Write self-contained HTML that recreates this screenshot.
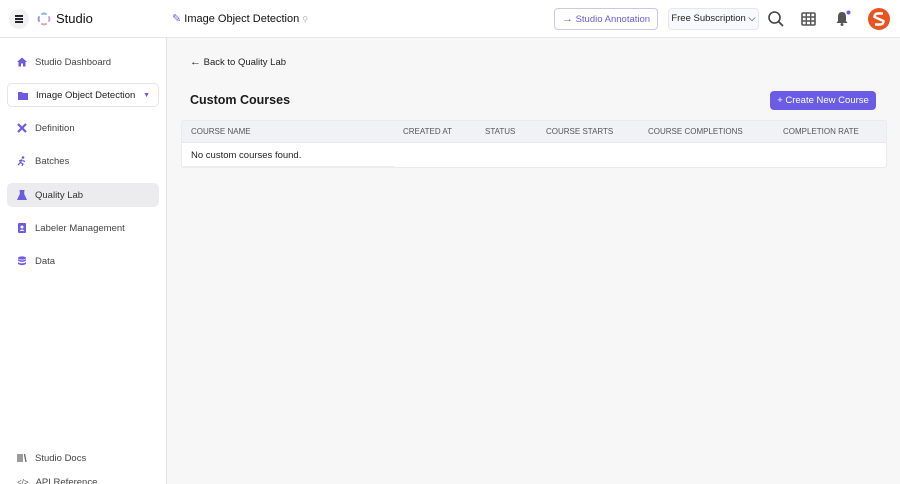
<!DOCTYPE html><html><head><style>
*{box-sizing:border-box;margin:0;padding:0}
html,body{width:900px;height:484px;overflow:hidden}
body{font-family:"Liberation Sans",sans-serif;background:#f7f7f8;color:#222;position:relative}
.hdr{position:absolute;left:0;top:0;width:900px;height:38px;background:#fff;border-bottom:1px solid #e6e6e8}
.sb{position:absolute;left:0;top:38px;width:167px;height:446px;background:#fff;border-right:1px solid #e4e4e6;overflow:hidden}
.it{position:absolute;left:7px;width:152px;height:24px;font-size:9.5px;color:#444;display:flex;align-items:center;padding-left:10px;border-radius:5px}
.it svg{margin-right:8px}
.ab{position:absolute;font-size:9.5px}
</style></head><body>
<div class="hdr">
 <div style="position:absolute;left:9px;top:9px;width:20px;height:20px;border-radius:50%;background:#f1f1f3"></div>
 <div style="position:absolute;left:15px;top:15px;width:8px;height:1.5px;background:#222;box-shadow:0 3px 0 #222,0 6px 0 #222"></div>
 <svg style="position:absolute;left:37px;top:12px" width="14" height="14" viewBox="0 0 14 14"><g fill="none" stroke-width="2" stroke-linecap="round"><path d="M5 2A5 5 0 0 1 9 2" stroke="#8fb3e8"/><path d="M12 5A5 5 0 0 1 12 9" stroke="#c9a3e0"/><path d="M9 12A5 5 0 0 1 5 12" stroke="#e7a0b7"/><path d="M2 9A5 5 0 0 1 2 5" stroke="#a98fe0"/></g></svg>
 <div class="ab" style="left:56px;top:11px;font-size:13px;color:#111">Studio</div>
 <div class="ab" style="left:172px;top:12px;font-size:11px;color:#111"><span style="color:#6b5ce0">✎</span> Image Object Detection <span style="color:#bbb;font-size:8px">⚲</span></div>
 <div class="ab" style="left:554px;top:8px;width:104px;height:22px;border:1px solid #c9c6e8;border-radius:4px;color:#6b5ce0;font-size:9.5px;line-height:20px;text-align:center"><span style="font-size:11px">→</span> Studio Annotation</div>
 <div class="ab" style="left:668px;top:8px;width:91px;height:22px;border:1px solid #e6e7ee;background:#f8f9fc;border-radius:4px;color:#222;font-size:9.5px;line-height:20px;text-align:center">Free Subscription ⌵</div>
 <svg style="position:absolute;left:767px;top:10px" width="18" height="18" viewBox="0 0 18 18"><circle cx="7.5" cy="7.5" r="5.5" fill="none" stroke="#444" stroke-width="1.6"/><path d="M11.5 11.5L16 16" stroke="#444" stroke-width="1.8"/></svg>
 <svg style="position:absolute;left:801px;top:12px" width="15" height="14" viewBox="0 0 15 14"><rect x="1" y="1" width="13" height="12" rx="1" fill="none" stroke="#555" stroke-width="1.6"/><path d="M5.3 1V13M9.7 1V13M1 5H14M1 9H14" stroke="#555" stroke-width="1.4"/></svg>
 <svg style="position:absolute;left:834px;top:9px" width="18" height="18" viewBox="0 0 18 18"><path d="M8 3C5 3 4 5 4 8V12L2.5 14H13.5L12 12V8C12 5 11 3 8 3Z" fill="#555"/><circle cx="8" cy="15.5" r="1.5" fill="#555"/><circle cx="14.5" cy="3.5" r="2" fill="#6b5ce0"/></svg>
 <div class="ab" style="left:868px;top:8px;width:22px;height:22px;border-radius:50%;background:#e8531f"><svg width="22" height="22" viewBox="0 0 22 22"><path d="M15 5.5H10Q6.5 5.5 6.5 9 L15.5 13 Q15.5 16.5 12 16.5H7" fill="none" stroke="#fff" stroke-width="2.4"/></svg></div>
</div>
<div class="sb">
 <div class="it" style="top:12px"><svg width="10" height="10" viewBox="0 0 10 10"><path d="M5 0.5L0 5H1.5V9.5H4V6.5H6V9.5H8.5V5H10Z" fill="#6b5ce0"/></svg>Studio Dashboard</div>
 <div class="it" style="top:45px;border:1px solid #e6e6ea;color:#222"><svg width="10" height="9" viewBox="0 0 10 9"><path d="M0 1H4L5 2H10V9H0Z" fill="#6b5ce0"/></svg>Image Object Detection<span style="position:absolute;right:8px;color:#6b5ce0;font-size:7px">▼</span></div>
 <div class="it" style="top:78px"><svg width="10" height="10" viewBox="0 0 10 10"><path d="M1 1L9 9M9 1L1 9" stroke="#6b5ce0" stroke-width="2.2"/></svg>Definition</div>
 <div class="it" style="top:111px"><svg width="10" height="10" viewBox="0 0 10 10"><circle cx="6" cy="1.5" r="1.3" fill="#6b5ce0"/><path d="M5 3.5L3.5 6.5L6 8L5 10M4.5 4L2 5M5.5 4.5L8 5.5M3.5 6.5L1 9" stroke="#6b5ce0" stroke-width="1.3" fill="none"/></svg>Batches</div>
 <div class="it" style="top:145px;background:#ececee;color:#333"><svg width="10" height="10" viewBox="0 0 10 10"><path d="M3.5 0.5V4L1 9.5H9L6.5 4V0.5M2.5 0.5H7.5" stroke="#6b5ce0" stroke-width="1.4" fill="#6b5ce0"/></svg>Quality Lab</div>
 <div class="it" style="top:178px"><svg width="10" height="10" viewBox="0 0 10 10"><rect x="1" y="0" width="8" height="10" rx="1" fill="#6b5ce0"/><circle cx="5" cy="4" r="1.5" fill="#fff"/><path d="M2.5 8Q5 5 7.5 8" fill="#fff"/></svg>Labeler Management</div>
 <div class="it" style="top:211px"><svg width="10" height="10" viewBox="0 0 10 10"><ellipse cx="5" cy="2" rx="4" ry="1.6" fill="#6b5ce0"/><path d="M1 3.3V4.8Q5 7 9 4.8V3.3Q5 5.5 1 3.3ZM1 6.3V8Q5 10.2 9 8V6.3Q5 8.5 1 6.3Z" fill="#6b5ce0"/></svg>Data</div>
 <div class="it" style="top:408px"><svg width="10" height="10" viewBox="0 0 10 10"><path d="M1 1V9M3 1V9M5 1V9M7.5 1L9 9" stroke="#666" stroke-width="1.3"/></svg>Studio Docs</div>
 <div class="it" style="top:432px"><span style="font-size:8px;margin-right:7px;color:#555">&lt;/&gt;</span>API Reference</div>
</div>
<div class="ab" style="left:190px;top:56px;color:#222"><span style="font-size:11px">←</span> Back to Quality Lab</div>
<div class="ab" style="left:190px;top:93px;font-size:12.5px;font-weight:bold;color:#1a1a1a">Custom Courses</div>
<div class="ab" style="left:770px;top:91px;width:106px;height:19px;background:#6b5ce6;border-radius:4px;color:#fff;line-height:19px;text-align:center">+ Create New Course</div>
<div style="position:absolute;left:181px;top:120px;width:706px;height:48px;background:#fff;border:1px solid #ebebef;border-radius:3px;overflow:hidden">
 <div style="height:22px;background:#f1f2f5;border-bottom:1px solid #e7e8ec;position:relative;color:#555">
  <span class="ab" style="left:9px;top:6px;font-size:8px">COURSE NAME</span>
  <span class="ab" style="left:221px;top:6px;font-size:8px">CREATED AT</span>
  <span class="ab" style="left:303px;top:6px;font-size:8px">STATUS</span>
  <span class="ab" style="left:364px;top:6px;font-size:8px">COURSE STARTS</span>
  <span class="ab" style="left:466px;top:6px;font-size:8px">COURSE COMPLETIONS</span>
  <span class="ab" style="left:601px;top:6px;font-size:8px">COMPLETION RATE</span>
 </div>
 <div class="ab" style="left:9px;top:29px;color:#222">No custom courses found.</div>
 <div class="ab" style="left:0;top:45px;width:212px;height:2px;background:#ececef"></div>
</div>
</body></html>
